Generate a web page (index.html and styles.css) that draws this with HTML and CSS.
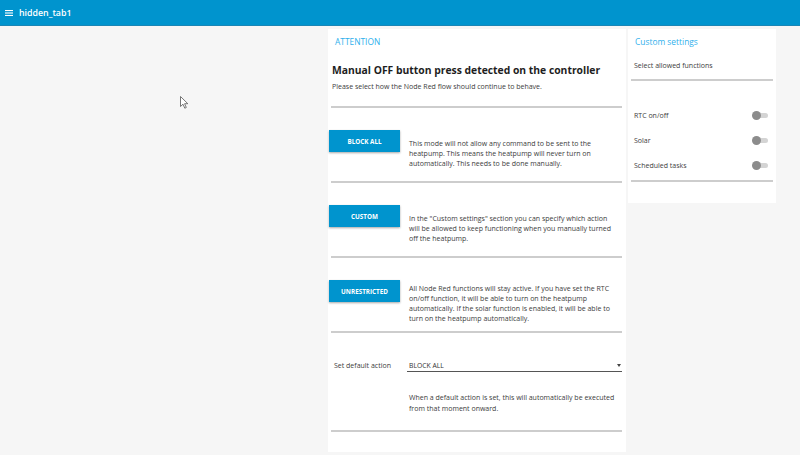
FILE: index.html
```html
<!DOCTYPE html>
<html lang="en">
<head>
<meta charset="utf-8">
<title>hidden_tab1</title>
<link rel="stylesheet" href="styles.css">
</head>
<body>
<header class="topbar">
  <svg class="menu-icon" viewBox="0 0 8 6" aria-hidden="true">
    <rect x="0" y="0" width="8" height="1.1" fill="#fff"/>
    <rect x="0" y="2.45" width="8" height="1.1" fill="#fff"/>
    <rect x="0" y="4.9" width="8" height="1.1" fill="#fff"/>
  </svg>
  <span class="title">hidden_tab1</span>
</header>

<main class="content">
  <section class="card card-main">
    <div class="card-title">ATTENTION</div>
    <div class="intro">
      <h1>Manual OFF button press detected on the controller</h1>
      <p>Please select how the Node Red flow should continue to behave.</p>
    </div>
    <div class="divider"></div>

    <div class="option">
      <button class="btn">BLOCK ALL</button>
      <div class="desc"><p>This mode will not allow any command to be sent to the<br>heatpump. This means the heatpump will never turn on<br>automatically. This needs to be done manually.</p></div>
    </div>
    <div class="divider"></div>

    <div class="option">
      <button class="btn">CUSTOM</button>
      <div class="desc"><p>In the "Custom settings" section you can specify which action<br>will be allowed to keep functioning when you manually turned<br>off the heatpump.</p></div>
    </div>
    <div class="divider"></div>

    <div class="option">
      <button class="btn">UNRESTRICTED</button>
      <div class="desc"><p>All Node Red functions will stay active. If you have set the RTC<br>on/off function, it will be able to turn on the heatpump<br>automatically. If the solar function is enabled, it will be able to<br>turn on the heatpump automatically.</p></div>
    </div>
    <div class="divider"></div>

    <div class="default">
      <div class="select-row">
        <span class="select-label">Set default action</span>
        <div class="select">
          <span>BLOCK ALL</span>
          <span class="caret"></span>
        </div>
      </div>
      <p class="note">When a default action is set, this will automatically be executed<br>from that moment onward.</p>
    </div>
    <div class="divider"></div>
  </section>

  <section class="card card-side">
    <div class="card-title side-title">Custom settings</div>
    <div class="side-sub">Select allowed functions</div>
    <div class="divider side-divider"></div>
    <ul class="toggles">
      <li class="toggle-row"><span>RTC on/off</span><span class="switch"><span class="knob"></span></span></li>
      <li class="toggle-row"><span>Solar</span><span class="switch"><span class="knob"></span></span></li>
      <li class="toggle-row"><span>Scheduled tasks</span><span class="switch"><span class="knob"></span></span></li>
    </ul>
    <div class="divider side-divider"></div>
  </section>
</main>

<svg class="cursor" viewBox="0 0 9 13" aria-hidden="true">
  <path d="M0.5 0.5 L0.5 10.5 L3 8.2 L4.8 12.2 L6.3 11.5 L4.6 7.7 L7.8 7.7 Z" fill="#fff" stroke="#555" stroke-width="0.8" stroke-linejoin="round"/>
</svg>
</body>
</html>
```

FILE: styles.css
```css
* { box-sizing: border-box; }

body {
  margin: 0;
  background: #f6f6f6;
  font-family: "Open Sans", "Noto Sans", sans-serif;
  color: #333;
}

.topbar {
  height: 26px;
  background: #0094ce;
  border-bottom: 1px solid #1a86b6;
  display: flex;
  align-items: center;
  padding-left: 5px;
  color: #fff;
}

.menu-icon {
  width: 8px;
  height: 6px;
  margin-right: 6px;
}

.title {
  font-size: 8.8px;
  font-weight: 600;
}

.content {
  display: flex;
  align-items: flex-start;
  gap: 2px;
  padding: 3px 0 0 328px;
}

.card {
  background: #fff;
}

.card-main {
  width: 298px;
  padding-bottom: 20px;
}

.card-side {
  width: 148px;
  padding-bottom: 21px;
}

.card-title {
  height: 25px;
  line-height: 25px;
  padding-left: 7px;
  font-size: 8.4px;
  color: #2fb0ec;
}

.intro {
  height: 52px;
  padding: 8px 0 0 4px;
}

.intro h1 {
  margin: 0;
  font-size: 10.35px;
  line-height: 16px;
  font-weight: 700;
  color: #1e1e1e;
}

.intro p {
  margin: 4px 0 0;
  font-size: 7px;
  line-height: 10px;
  color: #3c3c3c;
}

.divider {
  height: 2px;
  background: #cdcdcd;
  margin: 0 4px 0 3px;
}

.option {
  height: 73px;
  display: grid;
  grid-template-columns: 71px 1fr;
  column-gap: 9px;
  align-items: start;
  padding: 22px 0 0 1px;
}

.btn {
  height: 22px;
  border: none;
  border-radius: 0;
  background: #0094ce;
  color: #fff;
  font-family: inherit;
  font-size: 6.3px;
  font-weight: 700;
  padding: 0;
  box-shadow: 0 1px 2px rgba(0, 0, 0, 0.35);
}

.desc {
  height: 47px;
  display: flex;
  align-items: center;
}

.desc p,
.note {
  margin: 0;
  font-size: 7px;
  line-height: 10px;
  color: #3c3c3c;
  white-space: nowrap;
}

.default {
  height: 97px;
  padding: 26px 4px 0 6px;
}

.select-row {
  display: flex;
  align-items: center;
  height: 13px;
}

.select-label {
  width: 73px;
  font-size: 7px;
  line-height: 13px;
  color: #3c3c3c;
}

.select {
  flex: 1;
  height: 13px;
  border-bottom: 1px solid #555;
  display: flex;
  align-items: center;
  justify-content: space-between;
  padding: 0 1px 0 2px;
  font-size: 6.8px;
  color: #333;
}

.caret {
  width: 0;
  height: 0;
  border-left: 2px solid transparent;
  border-right: 2px solid transparent;
  border-top: 3px solid #444;
}

.note {
  margin: 20px 0 0 75px;
  line-height: 11px;
}

.side-sub {
  height: 25px;
  padding: 7px 0 0 6px;
  font-size: 7px;
  line-height: 10px;
  color: #3c3c3c;
}

.side-divider {
  margin: 0 3px;
}

.toggles {
  list-style: none;
  margin: 0;
  padding: 22px 0 2px;
}

.toggle-row {
  height: 25px;
  display: flex;
  align-items: center;
  justify-content: space-between;
  padding: 0 8px 0 6px;
  font-size: 7px;
  color: #3c3c3c;
}

.switch {
  position: relative;
  width: 14px;
  height: 5px;
  border-radius: 3px;
  background: #d4d4d4;
}

.knob {
  position: absolute;
  left: -2px;
  top: -2px;
  width: 9px;
  height: 9px;
  border-radius: 50%;
  background: #8c8c8c;
}

.cursor {
  position: absolute;
  left: 179.5px;
  top: 95.5px;
  width: 9px;
  height: 13px;
}
```
